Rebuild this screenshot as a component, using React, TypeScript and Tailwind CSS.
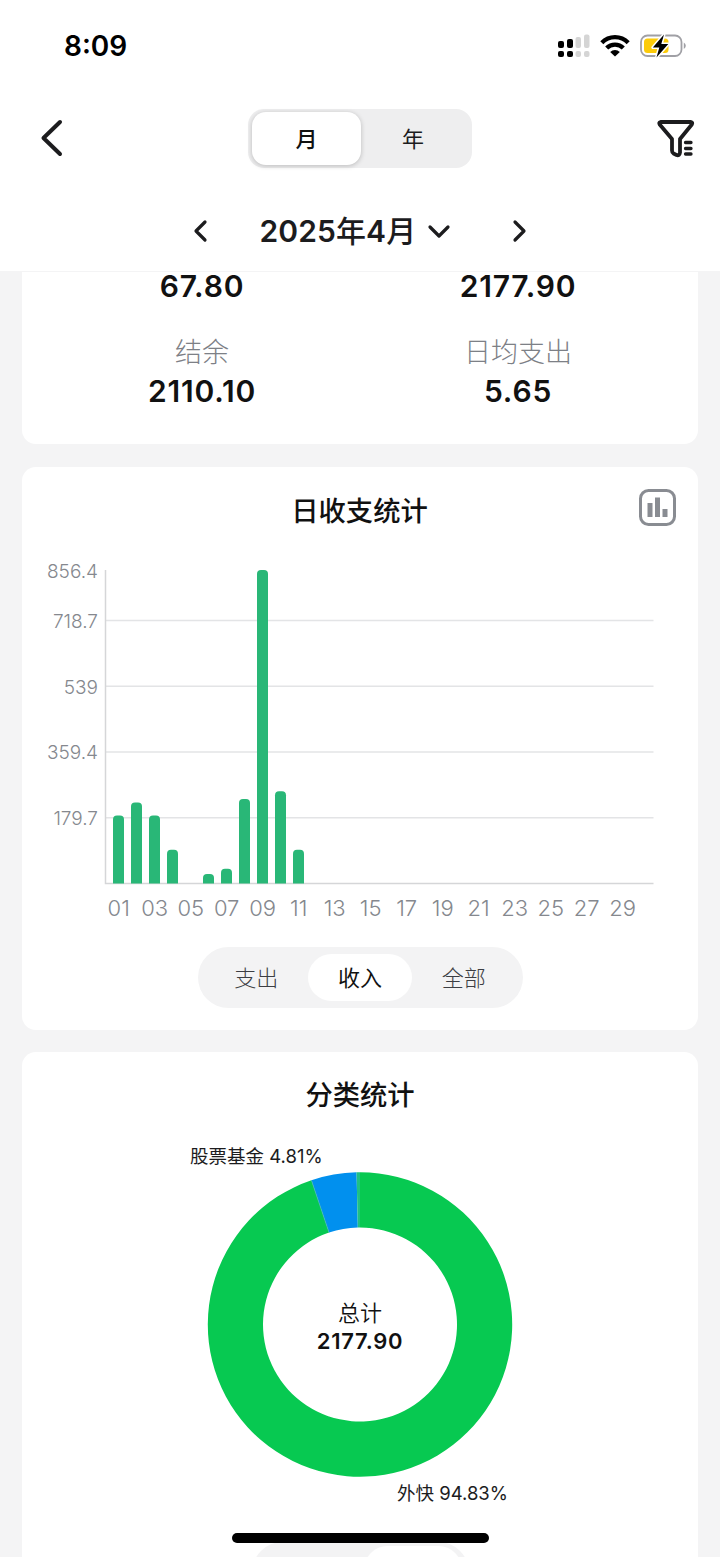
import type { ReactNode } from "react";

const days = [
  { day: 1, value: 186 },
  { day: 2, value: 221 },
  { day: 3, value: 186 },
  { day: 4, value: 92 },
  { day: 6, value: 26 },
  { day: 7, value: 40 },
  { day: 8, value: 231 },
  { day: 9, value: 856.4 },
  { day: 10, value: 252 },
  { day: 11, value: 92 },
];
const ticks = [718.7, 539, 359.4, 179.7];
const dayLabels = ["01", "03", "05", "07", "09", "11", "13", "15", "17", "19", "21", "23", "25", "27", "29"];

const BASE = 333.5;
const toY = (v: number) => BASE - v * 0.366;

function StatusBar() {
  return (
    <div className="flex h-[92px] items-center justify-between pl-16 pr-[33px]">
      <span className="text-[28px] font-semibold leading-none text-black">8:09</span>
      <div className="flex items-center">
        <svg width="32" height="24" viewBox="0 0 32 24" className="mr-[10px]">
          <g fill="#000">
            <rect x="0" y="7" width="6" height="7" rx="2" />
            <rect x="9" y="5" width="6" height="9" rx="2" />
            <rect x="0" y="17" width="6" height="6" rx="2" />
            <rect x="9" y="17" width="6" height="6" rx="2" />
          </g>
          <g fill="#d5d5d5">
            <rect x="17.500" y="3" width="5.500" height="11" rx="2" />
            <rect x="26" y="0.500" width="5.500" height="13.500" rx="2" />
            <rect x="17.500" y="17" width="5.500" height="6" rx="2" />
            <rect x="26" y="17" width="5.500" height="6" rx="2" />
          </g>
        </svg>
        <svg width="30" height="24" viewBox="0 0 30 24" className="mr-[10px]">
          <g fill="none" stroke="#000" strokeWidth="4.300">
            <path d="M1.800 8.700A18.600 18.600 0 0 1 28.200 8.700" />
            <path d="M6.700 14A11.700 11.700 0 0 1 23.300 14" />
          </g>
          <path d="M15 22.600L10.200 18A6.900 6.900 0 0 1 19.800 18Z" fill="#000" />
        </svg>
        <svg width="47" height="28" viewBox="0 0 47 28">
          <rect x="1" y="3.500" width="40.500" height="20.500" rx="6.500" fill="#fff" stroke="#a0a0a5" strokeWidth="1.800" />
          <rect x="4" y="6.500" width="24.500" height="14.500" rx="3.500" fill="#fccb0a" />
          <path d="M43.800 10.500v6.500q2-1.200 2-3.250t-2-3.250Z" fill="#a0a0a5" />
          <path d="M24 2.500L12.800 15.500H19.300L16.500 25.500L28.300 12H21.300Z" fill="#000" stroke="#fff" strokeWidth="3" paintOrder="stroke" strokeLinejoin="round" />
        </svg>
      </div>
    </div>
  );
}

function Chevron({ d, width, height, stroke = 3 }: { d: string; width: number; height: number; stroke?: number }) {
  return (
    <svg width={width} height={height} viewBox={`0 0 ${width} ${height}`} fill="none" stroke="#1c1c1e" strokeWidth={stroke} strokeLinecap="round" strokeLinejoin="round">
      <path d={d} />
    </svg>
  );
}

function Header() {
  return (
    <header className="h-[271px] bg-white">
      <StatusBar />
      <div className="flex h-[92px] items-center pl-10 pr-[25px]">
        <div className="w-[208px]">
          <Chevron d="M20 3L3.500 19L20 35" width={23} height={38} stroke={4} />
        </div>
        <div className="flex h-[59px] w-[224px] rounded-[16px] bg-[#eeeeef] p-[3px]">
          <div className="ml-px flex w-[109px] items-center justify-center rounded-[14px] bg-white pt-[3px] text-[22px] font-medium text-[#111] shadow-[0_1px_5px_rgba(0,0,0,0.22)]">月</div>
          <div className="flex flex-1 items-center justify-center pt-[3px] pr-1 text-[22px] text-[#1c1c1e]">年</div>
        </div>
        <svg width="38" height="40" viewBox="0 0 38 40" fill="none" stroke="#1c1c1e" strokeLinecap="round" strokeLinejoin="round" className="ml-auto mt-0.5">
          <path d="M3.500 3H34Q36 3.500 34.800 5.500L23 20V33.500Q22.500 37 19.500 36L16.500 34.500Q15 33.500 15 31.500V20L2.700 5.500Q1.500 3.500 3.500 3Z" strokeWidth="3.800" />
          <path d="M28.500 23.500H34M28.500 29.500H34M28.500 35H34" strokeWidth="3.300" />
        </svg>
      </div>
      <div className="flex h-[87px] items-center justify-center pr-px pt-[7px]">
        <Chevron d="M12 3L3 12L12 21" width={15} height={24} stroke={3.2} />
        <div className="ml-[52px] flex w-[191px] items-center justify-between">
          <span className="whitespace-nowrap text-[30px] font-semibold tracking-[0.1px] text-[#1c1c1e]">
            2025<span className="font-medium">年</span>4<span className="font-medium">月</span>
          </span>
          <Chevron d="M3 3L12 12L21 3" width={24} height={15} stroke={3.2} />
        </div>
        <div className="ml-[61px]">
          <Chevron d="M3 3L12 12L3 21" width={15} height={24} stroke={3.2} />
        </div>
      </div>
    </header>
  );
}

function Stat({ label, value }: { label?: string; value: string }) {
  return (
    <div className="flex flex-col items-center">
      {label && <span className="h-[45px] text-[27px] font-light leading-[42px] text-[#7d8086]">{label}</span>}
      <span className="text-[30px] font-semibold leading-[28px] tracking-[0.8px] text-[#111]">{value}</span>
    </div>
  );
}

function Card({ children, className }: { children: ReactNode; className: string }) {
  return <section className={`mx-[22px] bg-white ${className}`}>{children}</section>;
}

function BarChart() {
  return (
    <svg width="676" height="380" viewBox="0 0 676 380" className="block">
      {ticks.map((t) => (
        <path key={t} d={`M84 ${toY(t)}H631.500`} stroke="#e3e4e6" strokeWidth="1.500" />
      ))}
      <path d={`M83.500 20V${BASE}H631.500`} fill="none" stroke="#d5d6d8" strokeWidth="1.500" />
      <g fill="#85888e" fontSize="19" fontWeight="350" textAnchor="end">
        {[856.4, ...ticks].map((t) => (
          <text key={t} x="76" y={toY(t) + 7.5}>{t}</text>
        ))}
      </g>
      {days.map(({ day, value }) => {
        const x = 73 + day * 18;
        return (
          <path key={day} d={`M${x} ${BASE}V${toY(value) + 4}q0-4 4-4h3q4 0 4 4V${BASE}Z`} fill="#29b777" />
        );
      })}
      <g fill="#85888e" fontSize="22" fontWeight="350" textAnchor="middle">
        {dayLabels.map((label, i) => (
          <text key={label} x={96.7 + i * 36} y="365.500">{label}</text>
        ))}
      </g>
    </svg>
  );
}

// Point on a circle, measured clockwise from the top.
function point(fraction: number, r: number) {
  const a = fraction * Math.PI * 2;
  return `${338 + r * Math.sin(a)} ${192.5 - r * Math.cos(a)}`;
}

function slice(from: number, to: number) {
  const large = to - from > 0.5 ? 1 : 0;
  return `M${point(from, 152.2)}A152.2 152.2 0 ${large} 1 ${point(to, 152.2)}L${point(to, 97)}A97 97 0 ${large} 0 ${point(from, 97)}Z`;
}

function DonutChart() {
  return (
    <svg width="676" height="385" viewBox="0 0 676 385" className="block">
      <path d={slice(0, 0.9483)} fill="#07c951" />
      <path d={slice(0.9483, 0.9964)} fill="#0190ee" />
      <path d={slice(0.9964, 1)} fill="#1fc184" />
      <path d={`M${point(0.9483, 152)}L${point(0.9483, 97)}`} stroke="#45b8b0" strokeWidth="0.800" />
      <g fill="#1c1c1e" fontSize="18.500" fontWeight="400">
        <text x="168" y="31">股票基金 4.81%</text>
        <text x="375" y="368">外快 94.83%</text>
      </g>
      <g fill="#111" textAnchor="middle">
        <text x="338" y="189" fontSize="22" fontWeight="350">总计</text>
        <text x="338" y="216.500" fontSize="22" fontWeight="600" letterSpacing="0.700">2177.90</text>
      </g>
    </svg>
  );
}

export default function App() {
  return (
    <div className="relative h-[1557px] w-[720px] overflow-hidden bg-[#f4f4f5] font-[Inter,'Noto_Sans_CJK_SC',sans-serif]">
      <Header />

      <Card className="h-[173px] rounded-b-[14px] border-t border-[#f4f4f5] px-[22px]">
        <div className="grid grid-cols-2 gap-y-8">
          <Stat value="67.80" />
          <Stat value="2177.90" />
          <Stat label="结余" value="2110.10" />
          <Stat label="日均支出" value="5.65" />
        </div>
      </Card>

      <Card className="mt-[23px] h-[563px] rounded-[14px]">
        <div className="flex h-[83px] items-center justify-between pl-[22px] pr-[22px]">
          <span className="w-9" />
          <h2 className="pt-[7px] text-[27.3px] font-medium text-[#111]">日收支统计</h2>
          <svg width="37" height="37" viewBox="0 0 37 37" fill="none" stroke="#898c92" className="mb-0.5">
            <rect x="1.500" y="1.500" width="34" height="34" rx="8" strokeWidth="3" />
            <path d="M11 14V28M18.500 8.500V28M26 20V28" strokeWidth="5" />
          </svg>
        </div>
        <BarChart />
        <div className="mx-auto mt-[17px] flex h-[61px] w-[325px] items-center rounded-full bg-[#f3f3f4] px-[7px] text-[22px] text-[#3c3e43]">
          <span className="flex-1 pt-0.5 text-center font-light">支出</span>
          <span className="flex h-[47px] w-[104px] items-center justify-center rounded-full bg-white pt-0.5 text-[#111]">收入</span>
          <span className="flex-1 pt-0.5 text-center font-light">全部</span>
        </div>
      </Card>

      <Card className="mt-[22px] h-[520px] rounded-t-[14px]">
        <h2 className="flex h-20 items-center justify-center pt-[9px] text-[27.3px] font-medium text-[#111]">分类统计</h2>
        <DonutChart />
        <div className="mx-auto mt-[25px] flex h-[61px] w-[217px] justify-end rounded-full bg-[#f3f3f4] p-[7px] pt-1">
          <span className="h-[47px] w-[98px] rounded-full bg-white" />
        </div>
      </Card>

      {/* Home indicator floats above the scrolling cards */}
      <div className="absolute bottom-[14px] left-[232px] h-[10px] w-[257px] rounded-full bg-black" />
    </div>
  );
}
